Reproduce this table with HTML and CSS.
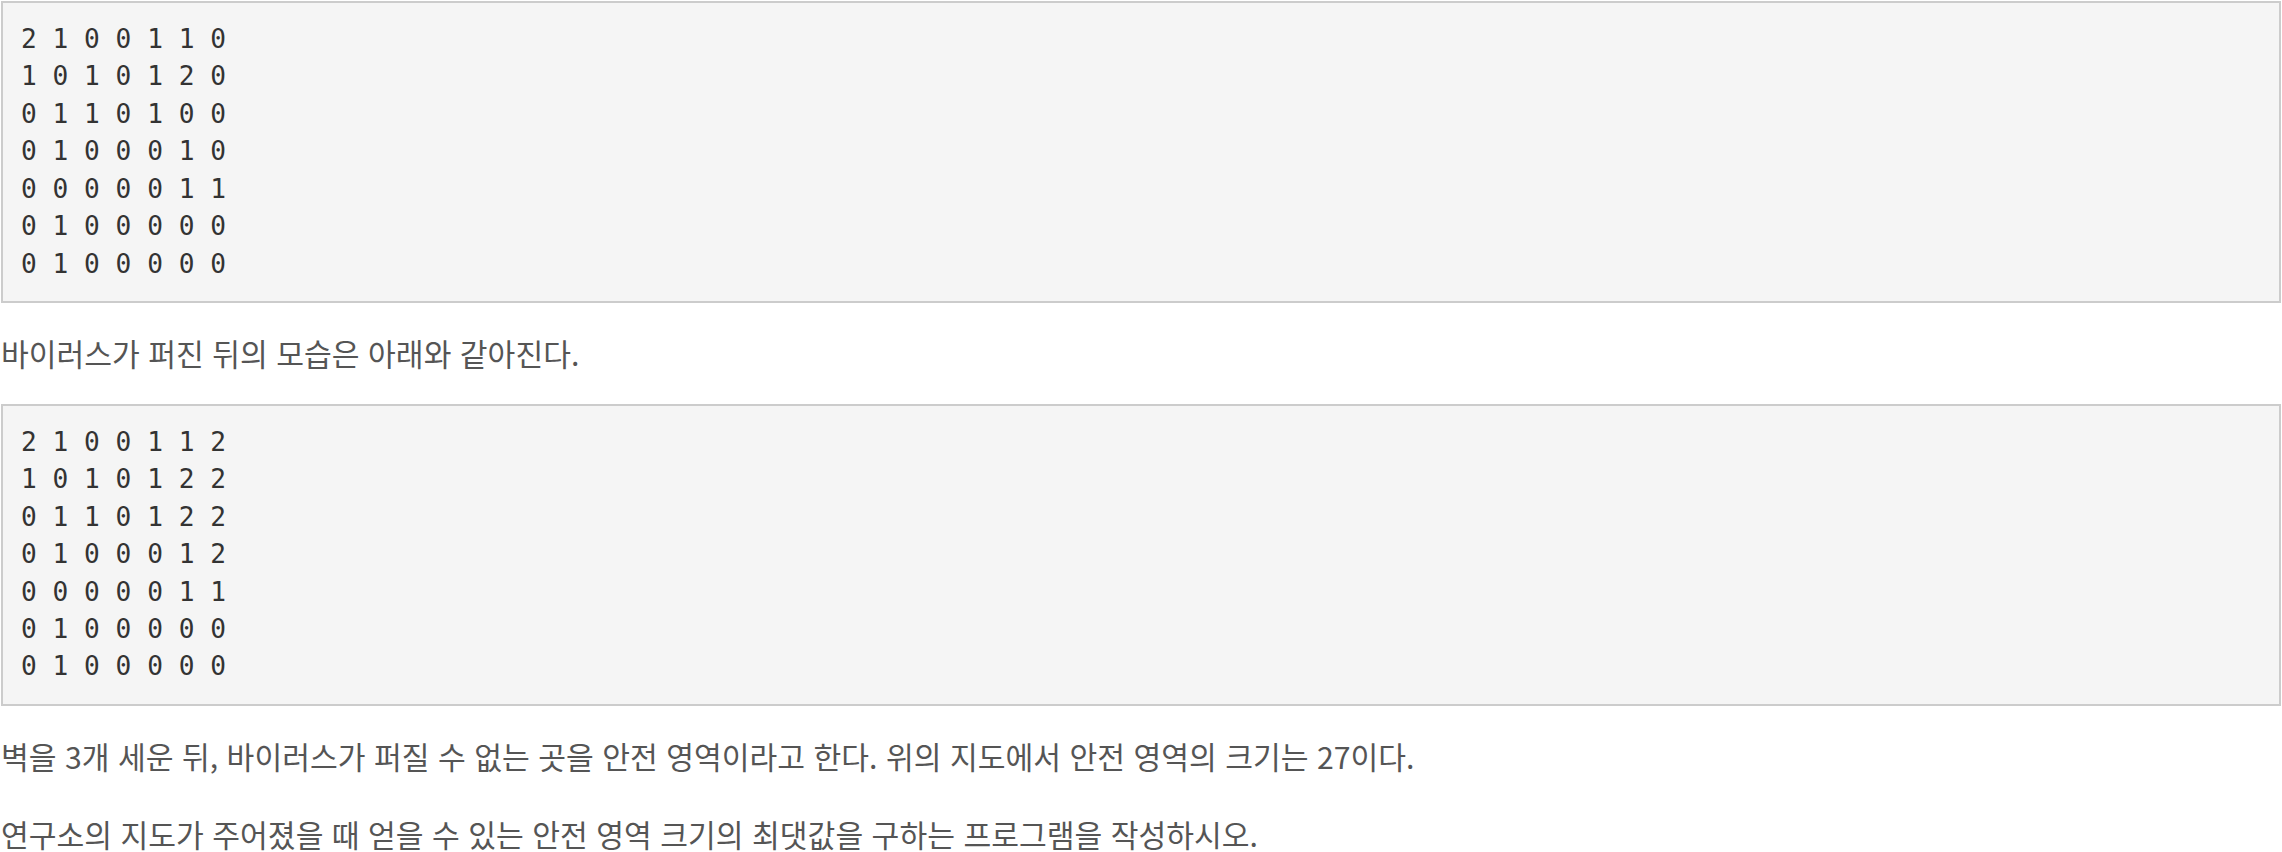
FILE: index.html
```html
<!DOCTYPE html>
<html lang="ko">

<head>
    <meta charset="UTF-8">
    <meta name="viewport" content="width=device-width, initial-scale=1.0">
    <title>연구소</title>
    <link rel="stylesheet" href="styles.css">
</head>

<body>
    <div class="problem-text">
        <pre class="grid">2 1 0 0 1 1 0
1 0 1 0 1 2 0
0 1 1 0 1 0 0
0 1 0 0 0 1 0
0 0 0 0 0 1 1
0 1 0 0 0 0 0
0 1 0 0 0 0 0</pre>

        <p>바이러스가 퍼진 뒤의 모습은 아래와 같아진다.</p>

        <pre class="grid">2 1 0 0 1 1 2
1 0 1 0 1 2 2
0 1 1 0 1 2 2
0 1 0 0 0 1 2
0 0 0 0 0 1 1
0 1 0 0 0 0 0
0 1 0 0 0 0 0</pre>

        <p>벽을 3개 세운 뒤, 바이러스가 퍼질 수 없는 곳을 안전 영역이라고 한다. 위의 지도에서 안전 영역의 크기는 27이다.</p>

        <p>연구소의 지도가 주어졌을 때 얻을 수 있는 안전 영역 크기의 최댓값을 구하는 프로그램을 작성하시오.</p>
    </div>
</body>

</html>
```

FILE: styles.css
```css
body {
    margin: 0;
    background-color: #fff;
}

.problem-text {
    padding: 1px;
    font-family: "Noto Sans CJK KR", "Noto Sans", sans-serif;
    font-size: 30.2px;
    line-height: 54px;
    color: #555;
}

.grid {
    margin: 0 0 23px 0;
    padding: 18px;
    border: 2px solid #ccc;
    background-color: #f5f5f5;
    font-family: "DejaVu Sans Mono", "Liberation Mono", monospace;
    font-size: 26.2px;
    line-height: 1.42857;
    color: #333;
}

p {
    margin: 0 0 24px 0;
}
```
